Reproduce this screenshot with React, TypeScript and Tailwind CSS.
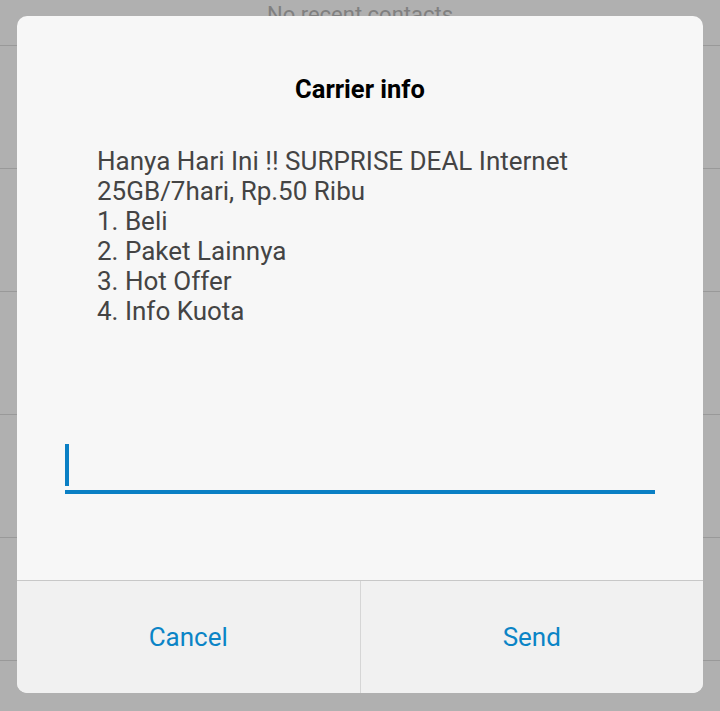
import React from 'react';

const rows = [0, 1, 2, 3, 4, 5];

export default function App() {
  return (
    <div className="relative w-[720px] h-[711px] overflow-hidden bg-[#b0b0b0] font-['Roboto',sans-serif]">
      {/* Background list behind the dialog */}
      <div className="flex flex-col">
        <div className="h-[46px] border-b border-[#999999] flex justify-center">
          <span className="text-[22px] leading-[26px] text-[#808080] mt-[2px]">No recent contacts</span>
        </div>
        {rows.map((r) => (
          <div key={r} className="h-[123px] border-b border-[#999999]" />
        ))}
      </div>

      {/* Dialog */}
      <div className="absolute left-[17px] top-[16px] w-[686px] h-[677px] rounded-[10px] bg-[#f7f7f7] flex flex-col overflow-hidden">
        <div className="flex-1 flex flex-col">
          <h1 className="mt-[57px] text-center text-[25.5px] leading-[32px] font-bold text-black">Carrier info</h1>
          <div className="mt-[41px] pl-[80px] text-[26px] leading-[30px] text-[#444444]">
            <p>Hanya Hari Ini !! SURPRISE DEAL Internet</p>
            <p>25GB/7hari, Rp.50 Ribu</p>
            <p>1. Beli</p>
            <p>2. Paket Lainnya</p>
            <p>3. Hot Offer</p>
            <p>4. Info Kuota</p>
          </div>
          <div className="mt-[118px] mx-[48px] h-[50px] border-b-4 border-[#0a7fc4] flex items-start">
            <div className="w-[4px] h-[42px] bg-[#0a7fc4]" />
          </div>
        </div>
        <div className="h-[113px] flex border-t border-[#c8c8c8] bg-[#f1f1f1]">
          <button className="flex-1 flex items-center justify-center text-[26px] text-[#0b84c6] border-r border-[#d6d6d6]">Cancel</button>
          <button className="flex-1 flex items-center justify-center text-[26px] text-[#0b84c6]">Send</button>
        </div>
      </div>
    </div>
  );
}
